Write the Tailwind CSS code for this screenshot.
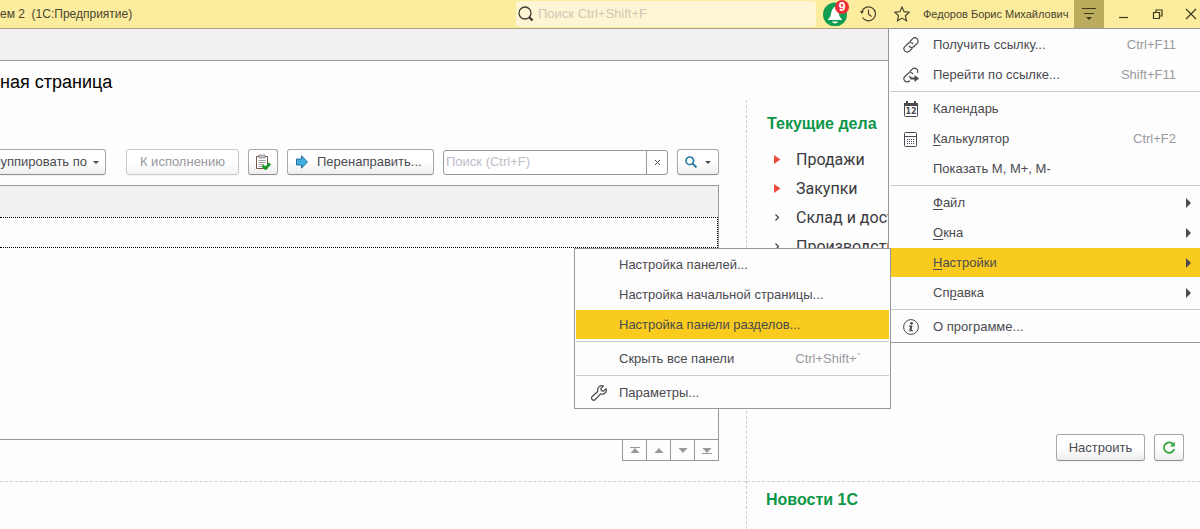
<!DOCTYPE html>
<html lang="ru">
<head>
    <meta charset="utf-8">
    <title>1С:Предприятие</title>
    <meta name="viewport" content="width=device-width, initial-scale=1.0">
    <script src="https://cdn.jsdelivr.net/npm/@tailwindcss/browser@4"></script>
</head>
<body class="relative flex flex-col h-screen overflow-hidden bg-[#fdfdfd] font-['Liberation_Sans',Arial,sans-serif] text-[13px] text-[#4a4a50]">

    <!-- Title bar -->
    <header class="relative shrink-0 flex items-center h-[29px] border-b border-[#a9a27e] bg-[#fbec9e] text-[#4b4530]">
        <div class="flex-1 text-xs whitespace-pre">ем 2  (1С:Предприятие)</div>
        <label class="flex items-center h-[26px] w-[300px] mr-[7px] pl-0.5 gap-1 rounded-sm bg-[#fef5d5]">
            <svg class="size-4 shrink-0" viewBox="0 0 16 16" fill="none" stroke="#3f3b30"><circle cx="7" cy="7" r="6" stroke-width="1.3"/><path d="M11.5 11.5l3 3" stroke-width="2.4"/></svg>
            <input type="search" aria-label="Поиск" placeholder="Поиск Ctrl+Shift+F" class="w-full outline-none placeholder:text-[#cfc8b4]">
        </label>
        <button class="relative size-6" aria-label="Оповещения">
            <svg class="size-6" viewBox="0 0 24 24"><circle cx="12" cy="12.500" r="12" fill="#0f9d4f"/><path d="M12 5c-1 0-1.600.6-1.800 1.500C8 8 8.500 12.500 7 15l-2 2.500v.5h14v-.5L17 15c-1.500-2.500-1-7-3.200-8.500C13.600 5.600 13 5 12 5zM9 19.500h6c-.6 1.300-1.600 2-3 2s-2.400-.7-3-2z" fill="#fff"/></svg>
            <span class="absolute -top-0.5 left-3 size-3.5 rounded-full bg-[#ee2e35] text-white text-xs leading-3.5 font-bold text-center">9</span>
        </button>
        <button class="ml-[13px] size-4" aria-label="История">
            <svg class="size-4" viewBox="0 0 16 16" fill="none" stroke="#4b4530" stroke-width="1.200"><path d="M1.700 6A7 7 0 1 1 2.500 11.500M8.500 3.500V8l3 2.500"/><path d="M0 5l1.800 3L4 5.200z" fill="#4b4530" stroke="none"/></svg>
        </button>
        <button class="ml-[18px] size-4" aria-label="Избранное">
            <svg class="size-4" viewBox="0 0 16 16" fill="none" stroke="#4b4530" stroke-width="1.200"><path d="M8 1l2.100 4.700 5.100.5-3.800 3.500 1.100 5L8 12.100l-4.500 2.600 1.100-5L.8 6.200l5.100-.5z"/></svg>
        </button>
        <span class="ml-[13px] w-[151px] text-[11px] whitespace-nowrap">Федоров Борис Михайлович</span>
        <button class="flex items-center justify-center w-[30px] h-7 bg-[#baab5d]" aria-label="Сервис и настройки">
            <svg class="w-4 h-4" viewBox="0 0 16 16"><path d="M1 2.500h14M3 7.500h10" stroke="#3d3820"/><path d="M5 11h6l-3 3z" fill="#3d3820"/></svg>
        </button>
        <button class="ml-[13px] size-3" aria-label="Свернуть">
            <svg class="size-3" viewBox="0 0 12 12"><path d="M2 9.500h9" stroke="#3d3820" stroke-width="1.200"/></svg>
        </button>
        <button class="ml-[23px] size-3" aria-label="Развернуть">
            <svg class="size-3" viewBox="0 0 12 12" fill="none" stroke="#3d3820" stroke-width="1.200"><path d="M1.500 4.500h6v6h-6zM4 4V2h6v6H8"/></svg>
        </button>
        <button class="ml-[21px] mr-[3px] size-3" aria-label="Закрыть">
            <svg class="size-3" viewBox="0 0 12 12"><path d="M1 1l10 10M11 1L1 11" stroke="#3d3820" stroke-width="1.200"/></svg>
        </button>

        <!-- Service menu -->
        <ul class="absolute top-7 right-0 z-10 w-[312px] border border-r-0 border-[#98989c] bg-[#fdfdfd] text-[13px] text-[#4a4a50]">
            <li class="mt-px"><button class="flex items-center w-full h-[29px] pl-3.5 pr-6 text-left">
                <svg class="w-4 h-4 mr-3.5" viewBox="0 0 16 16" fill="none" stroke="#4a4a50" stroke-width="1.200" stroke-linecap="round"><path d="M7 4.500l2.500-2.600a3.200 3.200 0 0 1 4.600 4.500L11 9.500a3.200 3.200 0 0 1-4.600 0M9 11.500l-2.500 2.600a3.200 3.200 0 0 1-4.600-4.500L5 6.500a3.200 3.200 0 0 1 4.600 0"/></svg>
                Получить ссылку...<kbd class="ml-auto font-['Liberation_Sans',Arial,sans-serif] text-[13px] text-[#9a9aa2]">Ctrl+F11</kbd></button></li>
            <li class="mt-px"><button class="flex items-center w-full h-[29px] pl-3.5 pr-6 text-left">
                <svg class="w-4 h-4 mr-3.5" viewBox="0 0 16 16" fill="none" stroke="#4a4a50" stroke-width="1.200" stroke-linecap="round"><path d="M7 4.500l2.500-2.600a3.200 3.200 0 0 1 5 3.600M6.400 9.500a3.200 3.200 0 0 0 1.600.9M6.500 14a3.200 3.200 0 0 1-4.600-4.500L5 6.500a3.200 3.200 0 0 1 4.600 0"/><path d="M8 11.500h4" stroke-width="2"/><path d="M11.500 8l4.500 3.500-4.500 3.500z" fill="#4a4a50" stroke="none"/></svg>
                Перейти по ссылке...<kbd class="ml-auto font-['Liberation_Sans',Arial,sans-serif] text-[13px] text-[#9a9aa2]">Shift+F11</kbd></button></li>
            <li class="my-0.5 ml-px h-px bg-[#c9cccc]" role="separator"></li>
            <li class="mt-px"><button class="flex items-center w-full h-[29px] pl-3.5 pr-6 text-left">
                <svg class="w-4 h-4 mr-3.5" viewBox="0 0 16 16"><path d="M1.500 2.500h13v12a1 1 0 0 1-1 1h-11a1 1 0 0 1-1-1z" fill="none" stroke="#4a4a50"/><path d="M1 2h14v3H1zM3 0h2v3H3zM11 0h2v3h-2z" fill="#4a4a50"/><text x="8" y="13" text-anchor="middle" font-size="8" font-weight="bold" font-family="DejaVu Sans, sans-serif" fill="#4a4a50">12</text></svg>
                <span>Кален<u class="underline-offset-2">д</u>арь</span></button></li>
            <li class="mt-px"><button class="flex items-center w-full h-[29px] pl-3.5 pr-6 text-left">
                <svg class="w-4 h-4 mr-3.5" viewBox="0 0 16 16" fill="none" stroke="#4a4a50"><rect x="1.500" y="1.500" width="12" height="14" rx="1"/><path d="M1.500 5.500h12"/><path d="M4 8.500h8M4 10.500h8M4 12.500h8" stroke-dasharray="1 1"/></svg>
                <span><u class="underline-offset-2">К</u>алькулятор</span><kbd class="ml-auto font-['Liberation_Sans',Arial,sans-serif] text-[13px] text-[#9a9aa2]">Ctrl+F2</kbd></button></li>
            <li class="mt-px"><button class="flex items-center w-full h-[29px] pl-11 text-left">Показать M, M+, M-</button></li>
            <li class="my-0.5 ml-px h-px bg-[#c9cccc]" role="separator"></li>
            <li class="mt-px"><button class="flex items-center justify-between w-full h-[29px] pl-11 pr-[9px] text-left">
                <span><u class="underline-offset-2">Ф</u>айл</span><svg class="w-[5px] h-2.5" viewBox="0 0 5 10"><path d="M0 0l5 5-5 5z" fill="#4a4a50"/></svg></button></li>
            <li class="mt-px"><button class="flex items-center justify-between w-full h-[29px] pl-11 pr-[9px] text-left">
                <span><u class="underline-offset-2">О</u>кна</span><svg class="w-[5px] h-2.5" viewBox="0 0 5 10"><path d="M0 0l5 5-5 5z" fill="#4a4a50"/></svg></button></li>
            <li class="relative mt-px"><button class="flex items-center justify-between w-full h-[29px] pl-11 pr-[9px] text-left bg-[#f9cb1e]">
                <span><u class="underline-offset-2">Н</u>астройки</span><svg class="w-[5px] h-2.5" viewBox="0 0 5 10"><path d="M0 0l5 5-5 5z" fill="#4a4a50"/></svg></button>

                <!-- Settings submenu -->
                <ul class="absolute top-0 right-full z-20 w-[317px] -mr-0.5 px-px pb-px border border-[#98989c] bg-[#fdfdfd]">
                    <li class="mt-px"><button class="flex items-center w-full h-[29px] pl-[43px] text-left">Настройка панелей...</button></li>
                    <li class="mt-px"><button class="flex items-center w-full h-[29px] pl-[43px] text-left">Настройка начальной страницы...</button></li>
                    <li class="mt-px"><button class="flex items-center w-full h-[29px] pl-[43px] text-left bg-[#f9cb1e]">Настройка панели разделов...</button></li>
                    <li class="my-0.5 h-px bg-[#c9cccc]" role="separator"></li>
                    <li class="mt-px"><button class="flex items-center justify-between w-full h-[29px] pl-[43px] pr-7 text-left">Скрыть все панели<kbd class="font-['Liberation_Sans',Arial,sans-serif] text-[13px] text-[#9a9aa2]">Ctrl+Shift+`</kbd></button></li>
                    <li class="my-0.5 h-px bg-[#c9cccc]" role="separator"></li>
                    <li class="mt-px"><button class="flex items-center w-full h-[29px] pl-[15px] text-left">
                        <svg class="w-4 h-4 mr-3" viewBox="0 0 16 16" fill="none" stroke="#4a4a50" stroke-width="1.200" stroke-linejoin="round"><path d="M12.500 1.100a4.200 4.200 0 0 0-5.600 5.200L1.200 11.500a2 2 0 0 0 3 3l5.400-5.600a4.200 4.200 0 0 0 5.500-5.300l-2.600 2.500-2.200-.5-.5-2.200z"/></svg>
                        Параметры...</button></li>
                </ul>
            </li>
            <li class="mt-px"><button class="flex items-center justify-between w-full h-[29px] pl-11 pr-[9px] text-left">
                <span>Сп<u class="underline-offset-2">р</u>авка</span><svg class="w-[5px] h-2.5" viewBox="0 0 5 10"><path d="M0 0l5 5-5 5z" fill="#4a4a50"/></svg></button></li>
            <li class="my-0.5 ml-px h-px bg-[#c9cccc]" role="separator"></li>
            <li class="my-px"><button class="flex items-center w-full h-[29px] pl-3.5 text-left">
                <svg class="w-4 h-4 mr-3.5" viewBox="0 0 16 16"><circle cx="8" cy="8" r="7.400" fill="none" stroke="#4a4a50"/><circle cx="8.500" cy="4.300" r="1.400" fill="#4a4a50"/><path d="M6 6.600h3.500L8.600 11h1.200v1.200H6.200L7.100 7.800H6z" fill="#4a4a50"/></svg>
                О программе...</button></li>
        </ul>
    </header>

    <!-- Open windows strip -->
    <div class="shrink-0 h-8 border-b border-[#98989c] bg-[#f2f0f2]"></div>

    <h1 class="shrink-0 h-[39px] leading-[42px] text-lg text-black">ная страница</h1>

    <main class="flex-1 min-h-0 flex">
        <div class="flex-1 min-w-0 flex flex-col border-r border-dashed border-[#cfcfd3]">
            <section class="flex-1 min-h-0 flex flex-col pt-[49px] pr-[27px] pb-5 border-b border-dashed border-[#cfcfd3]">
                <div class="flex items-center justify-end gap-[9px] h-[26px] whitespace-nowrap">
                    <button class="flex items-center justify-end gap-1.5 flex-1 min-w-0 overflow-hidden h-[26px] mr-[11px] pr-1.5 border border-l-0 border-[#a8a8ac] border-b-[#8e8e92] rounded-r-[3px] bg-linear-to-b from-white from-50% to-[#ededef] shadow-xs">
                        <span class="shrink-0">руппировать по</span>
                        <svg class="shrink-0 w-[6px] h-[3px]" viewBox="0 0 6 3"><path d="M0 0h6L3 3z" fill="#4a4a50"/></svg></button>
                    <button disabled class="shrink-0 w-[113px] h-[26px] border border-[#c8c8cc] rounded-[3px] bg-linear-to-b from-white from-50% to-[#f3f3f4] shadow-xs text-[#98989e]">К исполнению</button>
                    <button class="shrink-0 flex items-center justify-center w-[30px] h-[26px] border border-[#a8a8ac] border-b-[#8e8e92] rounded-[3px] bg-linear-to-b from-white from-50% to-[#ededef] shadow-xs" aria-label="Выполнено">
                        <svg class="size-4" viewBox="0 0 16 16"><path d="M1.500 2.500h11v12h-11z" fill="#fff" stroke="#765848"/><path d="M4 1h6v3H4z" fill="#c4c4c8" stroke="#8a8a8e" stroke-width=".8"/><path d="M3.500 6.500h7M3.500 8.500h7M3.500 10.500h5M3.500 12.500h4" stroke="#a0a0a4"/><path d="M7.500 11.500l3 3 4.500-5" fill="none" stroke="#159a25" stroke-width="2.800"/></svg></button>
                    <button class="shrink-0 flex items-center w-[147px] h-[26px] pl-2 gap-[9px] border border-[#a8a8ac] border-b-[#8e8e92] rounded-[3px] bg-linear-to-b from-white from-50% to-[#ededef] shadow-xs">
                        <svg class="w-3 h-3.5" viewBox="0 0 12 14"><path d="M.5 4h5V.8L11.500 7l-6 6.200V10h-5z" fill="#41aee0" stroke="#2a7199"/></svg>
                        Перенаправить...</button>
                    <div class="shrink-0 flex w-[225px] h-[25px] border border-[#98989c] rounded-[3px] bg-white">
                        <input type="text" aria-label="Поиск" placeholder="Поиск (Ctrl+F)" class="flex-1 min-w-0 pl-0.5 outline-none placeholder:text-[#bcbcc8]">
                        <button class="flex items-center justify-center w-[21px] border-l border-[#98989c]" aria-label="Очистить"><svg class="size-[5px]" viewBox="0 0 5 5"><path d="M0 0l5 5M5 0L0 5" stroke="#4a4a50"/></svg></button>
                    </div>
                    <button class="shrink-0 flex items-center justify-center gap-2 w-[42px] h-[26px] border border-[#a8a8ac] border-b-[#8e8e92] rounded-[3px] bg-linear-to-b from-white from-50% to-[#ededef] shadow-xs" aria-label="Найти">
                        <svg class="size-3" viewBox="0 0 12 12" fill="none" stroke="#2f7da8"><circle cx="4.800" cy="4.800" r="3.800" stroke-width="1.700"/><path d="M7.500 7.500l4 4" stroke-width="2"/></svg>
                        <svg class="w-[6px] h-[3px]" viewBox="0 0 6 3"><path d="M0 0h6L3 3z" fill="#4a4a50"/></svg></button>
                </div>

                <div class="flex-1 mt-2.5 border border-l-0 border-[#98989c]">
                    <table class="w-full border-separate border-spacing-0">
                        <thead><tr><th class="h-[31px] p-0 bg-[#f2f0f2]"></th></tr></thead>
                        <tbody><tr><td class="h-[31px] p-0 border border-l-0 border-dotted border-black"></td></tr></tbody>
                    </table>
                </div>
                <div class="self-end flex h-[21px] border border-t-0 border-[#98989c] divide-x divide-[#98989c]">
                    <button class="flex items-center justify-center w-6" aria-label="В начало"><svg class="w-[10px] h-[7px]" viewBox="0 0 10 7"><path d="M0 0h10v1H0zM5 1l4.500 5h-9z" fill="#98989c"/></svg></button>
                    <button class="flex items-center justify-center w-6" aria-label="Вверх"><svg class="w-[10px] h-[7px]" viewBox="0 0 10 7"><path d="M5 1l4.500 5h-9z" fill="#98989c"/></svg></button>
                    <button class="flex items-center justify-center w-6" aria-label="Вниз"><svg class="w-[10px] h-[7px]" viewBox="0 0 10 7"><path d="M5 6l4.500-5h-9z" fill="#98989c"/></svg></button>
                    <button class="flex items-center justify-center w-[23px]" aria-label="В конец"><svg class="w-[10px] h-[7px]" viewBox="0 0 10 7"><path d="M0 6h10v1H0zM5 6l4.500-5h-9z" fill="#98989c"/></svg></button>
                </div>
            </section>
            <section class="shrink-0 h-[47px]"></section>
        </div>

        <div class="shrink-0 w-[453px] flex flex-col">
            <section class="flex-1 min-h-0 flex flex-col px-5 pb-5 pt-3.5 border-b border-dashed border-[#cfcfd3]">
                <h2 class="text-base leading-5 font-bold text-[#0b9648]">Текущие дела</h2>
                <ul class="mt-[11px] font-[Roboto,sans-serif] text-base leading-[29px] text-[#3a3a40]">
                    <li class="flex items-center gap-[15px] pl-[7px]"><svg class="w-[7px] h-[9px]" viewBox="0 0 7 9"><path d="M0 0l6.500 4.500L0 9z" fill="#f04a3c"/></svg><a href="#">Продажи</a></li>
                    <li class="flex items-center gap-[15px] pl-[7px]"><svg class="w-[7px] h-[9px]" viewBox="0 0 7 9"><path d="M0 0l6.500 4.500L0 9z" fill="#f04a3c"/></svg><a href="#">Закупки</a></li>
                    <li class="flex items-center gap-[15px] pl-[7px]"><svg class="w-[7px] h-[9px]" viewBox="0 0 7 9" fill="none" stroke="#3a3a40" stroke-width="1.200"><path d="M1.500 1.500l3 3-3 3"/></svg><a href="#">Склад и доставка</a></li>
                    <li class="flex items-center gap-[15px] pl-[7px]"><svg class="w-[7px] h-[9px]" viewBox="0 0 7 9" fill="none" stroke="#3a3a40" stroke-width="1.200"><path d="M1.500 1.500l3 3-3 3"/></svg><a href="#">Производство</a></li>
                </ul>
                <div class="flex justify-end gap-[9px] mt-auto -mr-1">
                    <button class="w-[89px] h-[27px] border border-[#a8a8ac] border-b-[#8e8e92] rounded-[3px] bg-linear-to-b from-white from-50% to-[#ededef] shadow-xs">Настроить</button>
                    <button class="flex items-center justify-center w-[30px] h-[27px] border border-[#a8a8ac] border-b-[#8e8e92] rounded-[3px] bg-linear-to-b from-white from-50% to-[#ededef] shadow-xs" aria-label="Обновить">
                        <svg class="size-3.5" viewBox="0 0 14 14"><path d="M11.200 3.300A5.200 5.200 0 1 0 12.200 8" fill="none" stroke="#35a63a" stroke-width="1.800"/><path d="M12.800.8v4.700H8z" fill="#35a63a"/></svg></button>
                </div>
            </section>
            <section class="shrink-0 h-[47px] px-[19px] pt-2">
                <h2 class="text-base leading-5 font-bold text-[#0b9648]">Новости 1С</h2>
            </section>
        </div>
    </main>
</body>
</html>
